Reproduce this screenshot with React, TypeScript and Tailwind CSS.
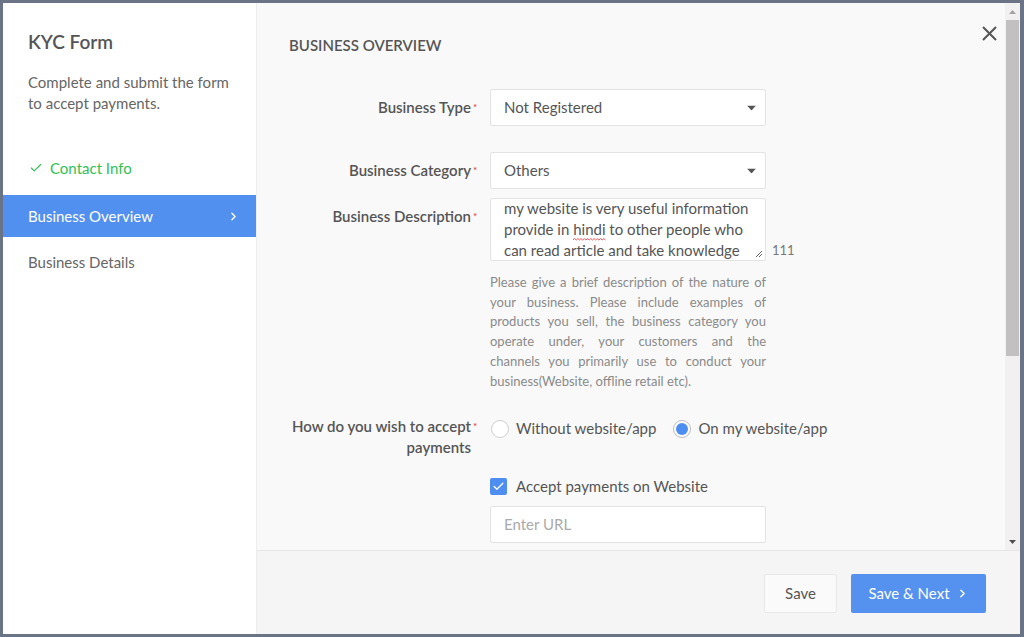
import { Check, ChevronRight } from 'lucide-react';

function Caret() {
  return (
    <svg width="9" height="5" viewBox="0 0 9 5" className="absolute right-[9px] top-1/2 -translate-y-1/2">
      <path d="M0 0h9L4.5 5z" fill="#555" />
    </svg>
  );
}

function Label({ children, lines }: { children: React.ReactNode; lines?: boolean }) {
  return (
    <div
      className={`w-[201px] shrink-0 pr-[19px] text-right text-[15px] font-semibold text-[#555] ${
        lines ? 'leading-[21px]' : 'pt-[8px] leading-5'
      }`}
    >
      {children}
    </div>
  );
}

// red asterisk sits after the label without pushing the text off its right edge
function Req() {
  return (
    <span className="relative inline-block w-0">
      <span className="absolute left-[2px] -top-[16px] text-[10px] text-[#e5484d]">*</span>
    </span>
  );
}

function SelectBox({ value }: { value: string }) {
  return (
    <div className="relative flex h-[37px] w-[276px] items-center rounded-[2px] border border-[#e3e3e3] bg-white px-[13px] text-[15px] text-[#555]">
      {value}
      <Caret />
    </div>
  );
}

const helpLines = [
  'Please give a brief description of the nature of',
  'your business. Please include examples of',
  'products you sell, the business category you',
  'operate under, your customers and the',
  'channels you primarily use to conduct your',
];

export default function App() {
  const sideItems = [
    { label: 'Contact Info', state: 'done' },
    { label: 'Business Overview', state: 'active' },
    { label: 'Business Details', state: 'todo' },
  ];

  return (
    <div className="h-[637px] w-[1024px] overflow-hidden bg-[#6b7487] pt-[3px] pb-[3px] pl-[3px] pr-[4px] font-['Lato',sans-serif]">
      <div className="flex h-full w-full bg-white">
        {/* Sidebar */}
        <aside className="w-[253px] shrink-0 bg-white pt-[27px]">
          <h1 className="pl-[25px] text-[19px] font-semibold leading-6 text-[#555]">KYC Form</h1>
          <p className="mt-[18px] pl-[25px] pr-[20px] text-[15px] leading-[21px] text-[#666]">
            Complete and submit the form to accept payments.
          </p>
          <nav className="mt-[33px] flex flex-col">
            {sideItems.map((item, i) => (
              <div
                key={item.label}
                className={`flex h-[42px] items-center pl-[25px] pr-[16px] text-[15px] ${
                  i === 1 ? 'mt-[6px]' : i === 2 ? 'mt-[4px]' : ''
                } ${
                  item.state === 'active'
                    ? 'bg-[#5190ee] text-white'
                    : item.state === 'done'
                      ? 'text-[#34bf55]'
                      : 'text-[#666]'
                }`}
              >
                {item.state === 'done' && <Check size={14} strokeWidth={2} className="mr-[7px] ml-[1px]" />}
                <span className="flex-1">{item.label}</span>
                {item.state === 'active' && <ChevronRight size={13} strokeWidth={2.5} />}
              </div>
            ))}
          </nav>
        </aside>

        {/* Main panel */}
        <main className="flex min-w-0 flex-1 flex-col border-l border-[#ededed] bg-[#f9f9f9]">
          <div className="relative flex h-[547px] shrink-0">
            <div className="flex-1 overflow-hidden pt-[32px] pl-[32px]">
              <h2 className="text-[15px] font-semibold uppercase leading-5 text-[#555]">Business Overview</h2>

              <div className="mt-[34px] flex">
                <Label>
                  Business Type
                  <Req />
                </Label>
                <SelectBox value="Not Registered" />
              </div>

              <div className="mt-[26px] flex">
                <Label>
                  Business Category
                  <Req />
                </Label>
                <SelectBox value="Others" />
              </div>

              <div className="mt-[9px] flex">
                <Label>
                  Business Description
                  <Req />
                </Label>
                <div>
                  <div className="flex items-end">
                    <div className="relative h-[63px] w-[276px] overflow-hidden rounded-[2px] border border-[#e3e3e3] bg-white px-[13px] text-[15px] leading-[21px] text-[#555]">
                      <div className="-mt-[1px] whitespace-nowrap">my website is very useful information</div>
                      <div className="whitespace-nowrap">
                        provide in{' '}
                        <span className="relative inline-block">
                          hindi
                          <svg
                            className="absolute left-0 -bottom-[1px] h-[3px] w-full"
                            viewBox="0 0 30 3"
                            preserveAspectRatio="none"
                          >
                            <path d="M0 2L1.5 0.5L3 2L4.5 0.5L6 2L7.5 0.5L9 2L10.5 0.5L12 2L13.5 0.5L15 2L16.5 0.5L18 2L19.5 0.5L21 2L22.5 0.5L24 2L25.5 0.5L27 2L28.5 0.5L30 2" stroke="#e5484d" strokeWidth="0.9" fill="none" />
                          </svg>
                        </span>{' '}
                        to other people who
                      </div>
                      <div className="whitespace-nowrap">can read article and take knowledge</div>
                      <svg width="8" height="8" viewBox="0 0 8 8" className="absolute right-[2px] bottom-[2px]">
                        <path d="M1 7L7 1M4 7L7 4" stroke="#666" strokeWidth="1" />
                      </svg>
                    </div>
                    <span className="ml-[6px] pb-[1px] text-[13px] leading-5 text-[#777]">111</span>
                  </div>
                  <div className="mt-[12px] w-[276px] text-[13px] leading-[19.7px] text-[#8a8a8a]">
                    {helpLines.map((l) => (
                      <div key={l} className="text-justify [text-align-last:justify]">
                        {l}
                      </div>
                    ))}
                    <div>business(Website, offline retail etc).</div>
                  </div>
                </div>
              </div>

              <div className="mt-[25px] flex">
                <Label lines>
                  How do you wish to accept
                  <Req />
                  <br />
                  payments
                </Label>
                <div className="flex h-[21px] items-center pt-[4px] text-[15px] text-[#555]">
                  <span className="ml-[1px] h-[18px] w-[18px] rounded-full border border-[#cfcfcf] bg-white" />
                  <span className="ml-[7px]">Without website/app</span>
                  <span className="ml-[17px] flex h-[18px] w-[18px] items-center justify-center rounded-full border border-[#bdbdbd] bg-white">
                    <span className="h-[12px] w-[12px] rounded-full bg-[#4d8ef0]" />
                  </span>
                  <span className="ml-[7px]">On my website/app</span>
                </div>
              </div>

              <div className="mt-[20px] flex">
                <div className="w-[201px] shrink-0" />
                <div>
                  <div className="flex h-[17px] items-center text-[15px] text-[#555]">
                    <span className="flex h-[17px] w-[17px] items-center justify-center rounded-[2px] bg-[#4d8ef0]">
                      <Check size={13} strokeWidth={2.5} color="white" />
                    </span>
                    <span className="ml-[9px]">Accept payments on Website</span>
                  </div>
                  <div className="mt-[11px] flex h-[37px] w-[276px] items-center rounded-[2px] border border-[#e3e3e3] bg-white px-[13px] text-[15px] text-[#aaa]">
                    Enter URL
                  </div>
                </div>
              </div>
            </div>

            <button className="absolute top-[23px] right-[23px]">
              <svg width="15" height="15" viewBox="0 0 15 15">
                <path d="M1 1L14 14M14 1L1 14" stroke="#555" strokeWidth="2" />
              </svg>
            </button>

            {/* Scrollbar */}
            <div className="flex w-[15px] shrink-0 flex-col bg-[#f1f1f1]">
              <div className="flex h-[17px] items-center justify-center">
                <svg width="7" height="4" viewBox="0 0 7 4">
                  <path d="M0 4h7L3.5 0z" fill="#a3a3a3" />
                </svg>
              </div>
              <div className="mx-[1px] h-[336px] bg-[#c1c1c1]" />
              <div className="flex-1" />
              <div className="flex h-[17px] items-center justify-center">
                <svg width="7" height="4" viewBox="0 0 7 4">
                  <path d="M0 0h7L3.5 4z" fill="#505050" />
                </svg>
              </div>
            </div>
          </div>

          {/* Footer */}
          <footer className="flex flex-1 items-center justify-end gap-[14px] border-t border-[#e6e6e6] bg-[#f5f5f5] pt-[2px] pr-[34px]">
            <button className="h-[39px] w-[73px] rounded-[2px] border border-[#e8e8e8] bg-[#fafafa] text-[15px] text-[#555]">
              Save
            </button>
            <button className="flex h-[39px] w-[135px] items-center justify-center gap-[6px] rounded-[2px] bg-[#5591ef] text-[15px] text-white">
              Save &amp; Next
              <ChevronRight size={13} strokeWidth={2.5} />
            </button>
          </footer>
        </main>
      </div>
    </div>
  );
}
